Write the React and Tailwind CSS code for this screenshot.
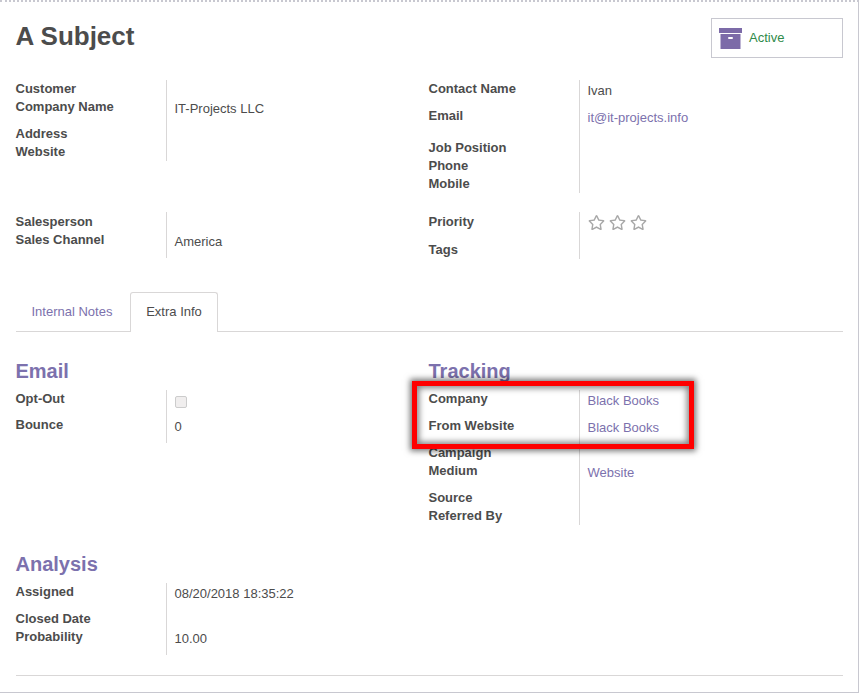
import React from 'react';
import { FaRegStar } from 'react-icons/fa';

const purple = 'text-[#7c71ad]';

function Row({ label, height, labelClass = '', children }) {
    return (
        <div className={`flex ${height}`}>
            <div className={`w-[150px] shrink-0 font-bold ${labelClass}`}>{label}</div>
            <div className="flex-1 border-l border-[#d9d7d7] pl-2 pt-[2px]">{children}</div>
        </div>
    );
}

function Group({ children, className = '' }) {
    return <div className={`flex ${className}`}>{children}</div>;
}

function Heading({ children }) {
    return <h2 className={`text-[20px] leading-[22px] font-bold ${purple}`}>{children}</h2>;
}

export default function App() {
    return (
        <div className="relative w-[859px] h-[693px] overflow-hidden bg-white border-solid border-t-2 [border-top-style:dotted] border-t-[#c8c8d0] border-r border-r-[#c8c8d0] border-b border-b-[#c8c8d0] pl-[15.5px] pr-[15.5px] text-[13px] leading-[18px] text-[#4c4c4c] [font-family:'Liberation_Sans',Arial,sans-serif]">
            <div className="flex justify-between h-[78px] pt-4">
                <h1 className="text-[26px] leading-[36px] font-bold">A Subject</h1>
                <button className="flex items-center w-[132px] h-[40px] border border-[#c8c8d0] pl-[7.5px] text-left">
                    <svg width="23" height="21" viewBox="0 0 23 21" className="mr-[7px]">
                        <rect x="0" y="0" width="23" height="5" fill="#7c6ba8" />
                        <path d="M1.5 6h20v15h-20z" fill="#7c6ba8" />
                        <rect x="9" y="9" width="5" height="2" rx="1" fill="#fff" />
                    </svg>
                    <span className="text-[#2f8a4a]">Active</span>
                </button>
            </div>

            <Group>
                <div className="w-[413px]">
                    <Row label="Customer" height="h-[18px]" />
                    <Row label="Company Name" height="h-[27px]">IT-Projects LLC</Row>
                    <Row label="Address" height="h-[18px]" />
                    <Row label="Website" height="h-[18px]" />
                </div>
                <div className="flex-1">
                    <Row label="Contact Name" height="h-[27px]">Ivan</Row>
                    <Row label="Email" height="h-[32px]"><span className={purple}>it@it-projects.info</span></Row>
                    <Row label="Job Position" height="h-[18px]" />
                    <Row label="Phone" height="h-[18px]" />
                    <Row label="Mobile" height="h-[18px]" />
                </div>
            </Group>

            <Group className="mt-[19px]">
                <div className="w-[413px]">
                    <Row label="Salesperson" labelClass="pt-[1px]" height="h-[18px]" />
                    <Row label="Sales Channel" labelClass="pt-[1px]" height="h-[28px]"><div className="pt-[1px]">America</div></Row>
                </div>
                <div className="flex-1">
                    <Row label="Priority" labelClass="pt-[1px]" height="h-[28px]">
                        <div className="flex gap-1 text-[#a8a8a8]">
                            <FaRegStar size={17} />
                            <FaRegStar size={17} />
                            <FaRegStar size={17} />
                        </div>
                    </Row>
                    <Row label="Tags" labelClass="pt-[1px]" height="h-[19px]" />
                </div>
            </Group>

            <div className="flex items-end h-[40px] mt-[33px] border-b border-[#d9d7d7]">
                <div className={`w-[114.5px] h-[39px] pt-[11px] pl-4 ${purple}`}>Internal Notes</div>
                <div className="w-[88px] h-[40px] -mb-px pt-[10px] text-center bg-white border border-b-0 border-[#d9d7d7] rounded-t-[3px]">Extra Info</div>
            </div>

            <Group className="mt-[28px]">
                <div className="w-[413px]">
                    <Heading>Email</Heading>
                    <div className="mt-2">
                        <Row label="Opt-Out" height="h-[26px]">
                            <div className="w-3 h-3 mt-[4px] bg-[#f0eeee] border border-[#ccc] rounded-[2px]" />
                        </Row>
                        <Row label="Bounce" height="h-[27px]">0</Row>
                    </div>
                </div>
                <div className="flex-1">
                    <Heading>Tracking</Heading>
                    <div className="mt-2">
                        <Row label="Company" height="h-[27px]"><span className={purple}>Black Books</span></Row>
                        <Row label="From Website" height="h-[27px]"><span className={purple}>Black Books</span></Row>
                        <Row label="Campaign" height="h-[18px]" />
                        <Row label="Medium" height="h-[27px]"><span className={purple}>Website</span></Row>
                        <Row label="Source" height="h-[18px]" />
                        <Row label="Referred By" height="h-[18px]" />
                    </div>
                </div>
            </Group>

            <div className="mt-[28px]">
                <Heading>Analysis</Heading>
                <div className="mt-2 w-[413px]">
                    <Row label="Assigned" height="h-[27px]">08/20/2018 18:35:22</Row>
                    <Row label="Closed Date" height="h-[18px]" />
                    <Row label="Probability" height="h-[27px]">10.00</Row>
                </div>
            </div>

            <div className="mt-[20px] border-t border-[#d9d7d7]" />

            {/* red annotation over the tracking rows */}
            <div className="absolute left-[412px] top-[379px] w-[282px] h-[68px] border-[5px] border-[#ff0000] shadow-[0_0_6px_2px_rgba(0,0,0,0.55),inset_0_0_6px_2px_rgba(0,0,0,0.5)]" />
        </div>
    );
}
